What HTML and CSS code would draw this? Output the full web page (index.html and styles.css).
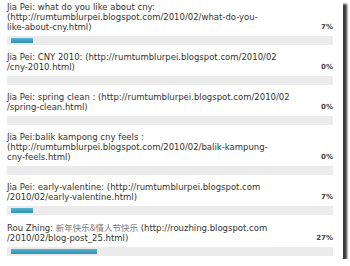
FILE: index.html
```html
<!DOCTYPE html>
<html>
<head>
  <title>Poll results</title>
  <link rel="stylesheet" href="styles.css">
</head>
<body>
  <div class="frame">

    <div class="item">
      <div class="line">
        <span class="text">Jia Pei: what do you like about cny:<br>(http://rumtumblurpei.blogspot.com/2010/02/what-do-you-<br>like-about-cny.html)</span>
        <span class="pct">7%</span>
      </div>
      <div class="track"><div class="fill" style="width: 7%"></div></div>
    </div>

    <div class="item">
      <div class="line">
        <span class="text">Jia Pei: CNY 2010: (http://rumtumblurpei.blogspot.com/2010/02<br>/cny-2010.html)</span>
        <span class="pct">0%</span>
      </div>
      <div class="track"><div class="fill" style="width: 0%"></div></div>
    </div>

    <div class="item">
      <div class="line">
        <span class="text">Jia Pei: spring clean : (http://rumtumblurpei.blogspot.com/2010/02<br>/spring-clean.html)</span>
        <span class="pct">0%</span>
      </div>
      <div class="track"><div class="fill" style="width: 0%"></div></div>
    </div>

    <div class="item">
      <div class="line">
        <span class="text">Jia Pei:balik kampong cny feels :<br>(http://rumtumblurpei.blogspot.com/2010/02/balik-kampung-<br>cny-feels.html)</span>
        <span class="pct">0%</span>
      </div>
      <div class="track"><div class="fill" style="width: 0%"></div></div>
    </div>

    <div class="item">
      <div class="line">
        <span class="text">Jia Pei: early-valentine: (http://rumtumblurpei.blogspot.com<br>/2010/02/early-valentine.html)</span>
        <span class="pct">7%</span>
      </div>
      <div class="track"><div class="fill" style="width: 7%"></div></div>
    </div>

    <div class="item">
      <div class="line">
        <span class="text">Rou Zhing: <span class="cjk">新年快乐&amp;情人节快乐</span> (http://rouzhing.blogspot.com<br>/2010/02/blog-post_25.html)</span>
        <span class="pct">27%</span>
      </div>
      <div class="track"><div class="fill" style="width: 27%"></div></div>
    </div>

  </div>
</body>
</html>
```

FILE: styles.css
```css
body {
  margin: 0;
  background: #fff;
  font-family: "DejaVu Sans", Verdana, sans-serif;
}

.frame {
  width: 343px;
  height: 259px;
  box-sizing: border-box;
  padding: 2px 10px 0 7px;
  background: #fff;
  box-shadow: 4px 4px 2px #3a3a3a;
}

.item {
  margin-bottom: 7px;
}

.line {
  display: flex;
  justify-content: space-between;
  align-items: flex-end;
}

.text {
  font-size: 8.5px;
  line-height: 10px;
  color: #333;
  white-space: nowrap;
}

.cjk {
  font-family: "Noto Sans CJK SC", sans-serif;
  color: #777;
}

.pct {
  font-size: 7px;
  line-height: 10px;
  font-weight: bold;
  color: #444;
}

.track {
  margin-top: 4px;
  height: 9px;
  box-sizing: border-box;
  padding: 2px 4px;
  background: #ebebeb;
}

.fill {
  height: 5px;
  background: linear-gradient(#5ab4cf, #2b8fb0);
}
```
